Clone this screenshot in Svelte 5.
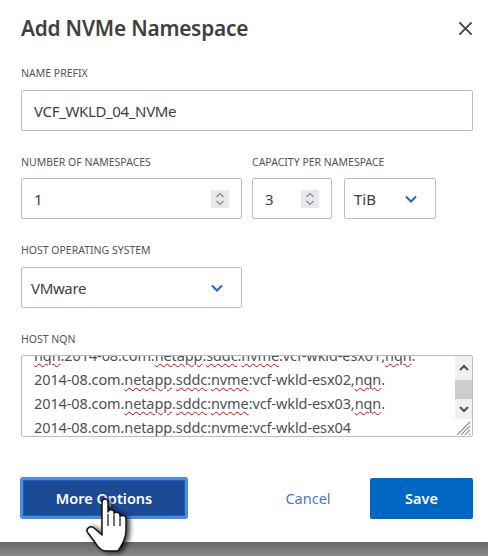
<script>
  const lines = [
    [['netapp', '.'], ['sddc', ':'], ['nvme', ':vcf-wkld-esx02,'], ['nqn', '.']],
    [['netapp', '.'], ['sddc', ':'], ['nvme', ':vcf-wkld-esx03,'], ['nqn', '.']],
    [['netapp', '.'], ['sddc', ':'], ['nvme', ':vcf-wkld-esx04']]
  ];
</script>

<div class="page">
  <main class="dialog">
    <header class="head">
      <h1>Add NVMe Namespace</h1>
      <svg class="close" width="15" height="15" viewBox="0 0 16 16"><path d="M1.500 1.500l13 13M14.500 1.500l-13 13" stroke="#444" stroke-width="2" fill="none"/></svg>
    </header>

    <section class="field prefix">
      <span class="label">NAME PREFIX</span>
      <div class="box full"><span class="val pad tight">VCF_WKLD_04_NVMe</span></div>
    </section>

    <section class="row">
      <div class="field">
        <span class="label">NUMBER OF NAMESPACES</span>
        <div class="box half">
          <span class="val pad">1</span>
          <svg class="spin" width="18" height="18" viewBox="0 0 18 18"><rect width="18" height="18" fill="#e8e8ec"/><path d="M5.500 7L9 3.500 12.500 7M5.500 11L9 14.500 12.500 11" stroke="#8a8a8a" stroke-width="1.200" fill="none"/></svg>
        </div>
      </div>
      <div class="field">
        <span class="label">CAPACITY PER NAMESPACE</span>
        <div class="pair">
          <div class="box cap">
            <span class="val pad">3</span>
            <svg class="spin" width="18" height="18" viewBox="0 0 18 18"><rect width="18" height="18" fill="#e8e8ec"/><path d="M5.500 7L9 3.500 12.500 7M5.500 11L9 14.500 12.500 11" stroke="#8a8a8a" stroke-width="1.200" fill="none"/></svg>
          </div>
          <div class="box unit">
            <span class="val">TiB</span>
            <svg class="chev" width="12" height="8" viewBox="0 0 12 8"><path d="M1 1.500l5 5 5-5" stroke="#1f66d1" stroke-width="2" fill="none"/></svg>
          </div>
        </div>
      </div>
    </section>

    <section class="field os">
      <span class="label">HOST OPERATING SYSTEM</span>
      <div class="box half sel">
        <span class="val tight">VMware</span>
        <svg class="chev" width="12" height="8" viewBox="0 0 12 8"><path d="M1 1.500l5 5 5-5" stroke="#1f66d1" stroke-width="2" fill="none"/></svg>
      </div>
    </section>

    <section class="field nqn">
      <span class="label">HOST NQN</span>
      <div class="area">
        <div class="text">
          <div class="line"><span class="sq">nqn</span>.2014-08.com.<span class="sq">netapp</span>.<span class="sq">sddc</span>:<span class="sq">nvme</span>:vcf-wkld-esx01,<span class="sq">nqn</span>.</div>
          {#each lines as line}
            <div class="line">2014-08.com.{#each line as [word, rest]}<span class="sq">{word}</span>{rest}{/each}</div>
          {/each}
        </div>
        <div class="bar">
          <div class="arrow"><svg width="10" height="7" viewBox="0 0 10 7"><path d="M1 6l4-4 4 4" stroke="#505050" stroke-width="2" fill="none"/></svg></div>
          <div class="thumb"></div>
          <div class="arrow down"><svg width="10" height="7" viewBox="0 0 10 7"><path d="M1 1l4 4 4-4" stroke="#505050" stroke-width="2" fill="none"/></svg></div>
          <svg class="grip" width="16" height="16" viewBox="0 0 16 16"><path d="M2 15L15 2M6 15L15 6M10 15l5-5M14 15l1-1" stroke="#8a8a8a" stroke-width="1.200" fill="none"/></svg>
        </div>
      </div>
    </section>

    <footer class="actions">
      <button class="more">More Options</button>
      <button class="cancel">Cancel</button>
      <button class="save">Save</button>
    </footer>
  </main>
  <div class="band"></div>

  <svg class="hand" width="60" height="64" viewBox="0 0 60 64">
    <defs><filter id="sh" x="-30%" y="-30%" width="170%" height="170%"><feDropShadow dx="3" dy="1" stdDeviation="2.500" flood-color="#000" flood-opacity=".75"/></filter></defs>
    <path d="M20 10c0-4 6-4 6 0V20c0-3 6-3 6 0v2c0-3 6-2 6 1v2c0-2 6-2 6 1v12c0 8-3 13-8 21H24c-5 0-8-4-12-10l-6-8c-3-4 2-8 6-5l8 7z" fill="#fff" stroke="#151515" stroke-width="1.500" stroke-linejoin="round" filter="url(#sh)"/>
    <path d="M26 22v12M32 23v11M38 26v8" stroke="#222" stroke-width="1.300" fill="none"/>
  </svg>
</div>

<style>
  :global(body) { margin: 0; background: #fff; }
  .page { position: relative; width: 488px; height: 556px; overflow: hidden; font-family: "Noto Sans", "Open Sans", sans-serif; color: #404040; display: flex; flex-direction: column; }
  .dialog { height: 542px; box-sizing: border-box; padding: 14px 15px 0 21px; }
  .head { display: flex; justify-content: space-between; align-items: center; height: 28px; }
  h1 { margin: 0; font-size: 20.800px; font-weight: 600; letter-spacing: -0.2px; color: #404040; }
  .field { display: flex; flex-direction: column; }
  .label { font-size: 10.500px; line-height: 14px; height: 14px; margin-bottom: 10px; color: #555; white-space: nowrap; }
  .prefix { margin-top: 24px; }
  .box { box-sizing: border-box; height: 41px; border: 1px solid #bdbdbd; border-radius: 2px; display: flex; align-items: center; background: #fff; }
  .full { width: 452px; }
  .half { width: 221px; justify-content: space-between; padding-right: 12px; }
  .val { font-size: 15px; color: #404040; }
  .tight { letter-spacing: -0.35px; }
  .pad { padding-left: 12px; }
  .row { display: flex; gap: 10px; margin-top: 24px; }
  .row .label { margin-bottom: 9px; }
  .pair { display: flex; gap: 12px; }
  .cap { width: 80px; justify-content: space-between; padding-right: 12px; }
  .unit { width: 92px; justify-content: space-between; padding: 0 18px 0 9px; }
  .sel { padding-left: 9px; padding-right: 18px; }
  .os { margin-top: 24px; }
  .nqn { margin-top: 24px; }
  .nqn .label { margin-bottom: 9px; }
  .area { box-sizing: border-box; width: 452px; height: 82px; border: 1px solid #bdbdbd; border-radius: 2px; display: flex; overflow: hidden; }
  .text { flex: 1; padding-left: 12px; margin-top: -13px; font-size: 14.500px; line-height: 24px; color: #505050; white-space: nowrap; letter-spacing: -0.1px; }
  .line { height: 24px; }
  .sq { text-decoration: underline wavy #e00000 1.300px; text-underline-offset: 2px; }
  .bar { width: 17px; display: flex; flex-direction: column; }
  .arrow { height: 24px; background: #f0f0f0; display: flex; align-items: center; justify-content: center; }
  .down { height: 20px; }
  .thumb { height: 20px; background: #cdcdcd; }
  .grip { margin-top: 1px; }
  .actions { display: flex; align-items: center; margin-top: 40px; }
  button { box-sizing: border-box; height: 41px; border: 0; border-radius: 2px; font-family: inherit; font-size: 14.500px; font-weight: 600; padding: 0; }
  .more { width: 168px; height: 42px; margin-left: -1px; background: #1d4a94; color: #fff; border: 3px solid #4a8ce8; border-radius: 3px; box-shadow: inset 0 0 0 1px #1c5fb8; }
  .cancel { width: 104px; margin-left: 68px; background: none; color: #3f78e0; font-weight: 400; }
  .save { width: 103px; margin-left: 10px; background: #0067c5; color: #fff; }
  .band { flex: 1; background: linear-gradient(#666, #888); }
  .hand { position: absolute; left: 82px; top: 492px; }
</style>
